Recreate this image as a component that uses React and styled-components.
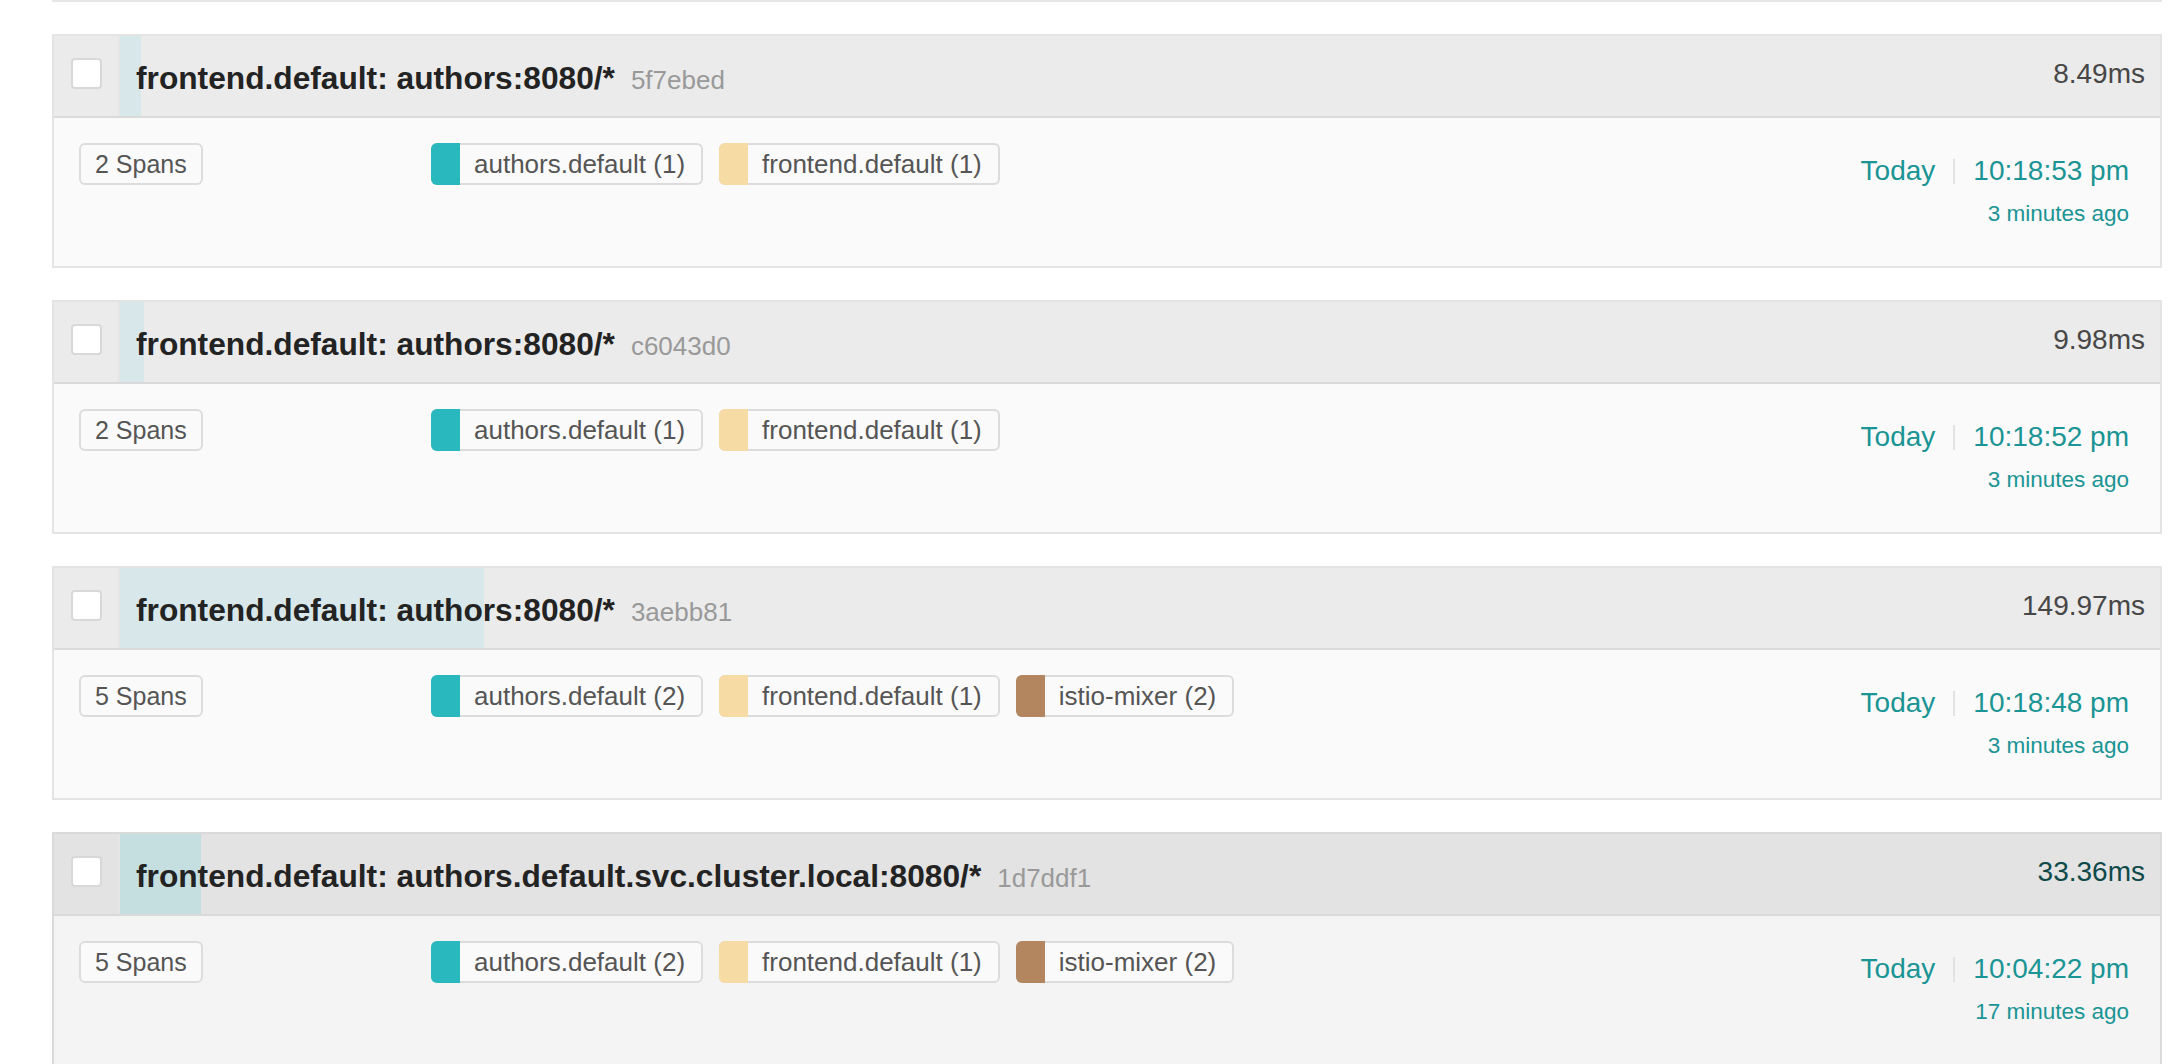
import React from 'react';
import styled, { createGlobalStyle } from 'styled-components';

const GlobalStyle = createGlobalStyle`
  html, body {
    margin: 0;
    padding: 0;
    background: #ffffff;
    overflow: hidden;
  }
  body {
    font-family: "Liberation Sans", Arial, Helvetica, sans-serif;
  }
`;

const Page = styled.div`
  padding: 0 14px 0 52px;
`;

const PrevEdge = styled.div`
  height: 2px;
  background: #e6e6e6;
  margin-bottom: 32px;
`;

const Card = styled.div`
  border: 2px solid ${(p) => (p.$active ? '#dadada' : '#e4e4e4')};
  margin-bottom: 32px;
`;

const Header = styled.div`
  display: flex;
  align-items: stretch;
  height: 80px;
  background: ${(p) => (p.$active ? '#e3e3e3' : '#ebebeb')};
  border-bottom: 2px solid #dadada;
`;

const CheckCell = styled.div`
  flex: none;
  width: 64px;
  box-sizing: border-box;
  padding: 22px 0 0 17px;
`;

const Checkbox = styled.span`
  display: block;
  width: 31px;
  height: 31px;
  box-sizing: border-box;
  background: #ffffff;
  border: 2px solid #d8d8d8;
  border-radius: 4px;
`;

const TitleCell = styled.div`
  position: relative;
  flex: 1;
  display: flex;
  align-items: flex-start;
  justify-content: space-between;
  border-left: 2px solid #e6e6e6;
  padding: 0 15px 0 16px;
`;

const DurationBar = styled.div`
  position: absolute;
  left: 0;
  top: 0;
  bottom: 0;
  background: ${(p) => (p.$active ? '#c5dfe1' : '#d8e7ea')};
`;

const TitleRow = styled.div`
  position: relative;
  display: flex;
  align-items: baseline;
  gap: 16px;
  padding-top: 24px;
`;

const TitleText = styled.span`
  font-size: 31.7px;
  line-height: 36px;
  font-weight: 700;
  color: #232323;
`;

const TraceId = styled.span`
  font-size: 26px;
  color: #999999;
`;

const Duration = styled.span`
  position: relative;
  padding-top: 22px;
  font-size: 28px;
  line-height: 32px;
  color: ${(p) => (p.$active ? '#0f4a4a' : '#474747')};
`;

const Body = styled.div`
  display: grid;
  grid-template-columns: 352px 1fr auto;
  align-items: start;
  height: 148px;
  box-sizing: border-box;
  padding: 25px 31px 0 25px;
  background: ${(p) => (p.$active ? '#f4f4f4' : '#fafafa')};
`;

const Pill = styled.span`
  display: inline-flex;
  align-items: center;
  height: 42px;
  box-sizing: border-box;
  border: 2px solid #dcdcdc;
  border-radius: 6px;
  background: #fafafa;
  color: #555555;
  white-space: nowrap;
`;

const SpanBadge = styled(Pill)`
  justify-self: start;
  padding: 0 14px;
  font-size: 25px;
`;

const Tags = styled.div`
  display: flex;
  gap: 16px;
`;

const Tag = styled(Pill)`
  padding-right: 16px;
  font-size: 26px;
`;

const Swatch = styled.span`
  align-self: stretch;
  width: 29px;
  margin: -2px 14px -2px -2px;
  border-radius: 6px 0 0 6px;
  background: ${(p) => p.$color};
`;

const TimeCol = styled.div`
  display: flex;
  flex-direction: column;
  align-items: flex-end;
  margin-top: 12px;
  color: #1a9494;
`;

const DateLine = styled.div`
  display: flex;
  align-items: center;
  gap: 18px;
  font-size: 28px;
  line-height: 32px;
`;

const Sep = styled.span`
  width: 2px;
  height: 25px;
  background: #e2e2e2;
`;

const Ago = styled.div`
  margin-top: 14px;
  font-size: 22.5px;
  line-height: 26px;
`;

const COLORS = {
  authors: '#29b8bd',
  frontend: '#f6dba5',
  mixer: '#b3865f',
};

const twoServices = (a, f) => [
  { name: 'authors.default', count: a, color: COLORS.authors },
  { name: 'frontend.default', count: f, color: COLORS.frontend },
];

const threeServices = [
  { name: 'authors.default', count: 2, color: COLORS.authors },
  { name: 'frontend.default', count: 1, color: COLORS.frontend },
  { name: 'istio-mixer', count: 2, color: COLORS.mixer },
];

const traces = [
  {
    title: 'frontend.default: authors:8080/*',
    id: '5f7ebed',
    ms: 8.49,
    spans: 2,
    services: twoServices(1, 1),
    time: '10:18:53 pm',
    ago: '3 minutes ago',
  },
  {
    title: 'frontend.default: authors:8080/*',
    id: 'c6043d0',
    ms: 9.98,
    spans: 2,
    services: twoServices(1, 1),
    time: '10:18:52 pm',
    ago: '3 minutes ago',
  },
  {
    title: 'frontend.default: authors:8080/*',
    id: '3aebb81',
    ms: 149.97,
    spans: 5,
    services: threeServices,
    time: '10:18:48 pm',
    ago: '3 minutes ago',
  },
  {
    title: 'frontend.default: authors.default.svc.cluster.local:8080/*',
    id: '1d7ddf1',
    ms: 33.36,
    spans: 5,
    services: threeServices,
    time: '10:04:22 pm',
    ago: '17 minutes ago',
    active: true,
  },
];

const MAX_MS = 149.97;
const MAX_BAR = 364;

function TraceCard({ t }) {
  const barWidth = (t.ms / MAX_MS) * MAX_BAR;
  return (
    <Card $active={t.active}>
      <Header $active={t.active}>
        <CheckCell>
          <Checkbox />
        </CheckCell>
        <TitleCell>
          <DurationBar $active={t.active} style={{ width: `${barWidth}px` }} />
          <TitleRow>
            <TitleText>{t.title}</TitleText>
            <TraceId>{t.id}</TraceId>
          </TitleRow>
          <Duration $active={t.active}>{t.ms.toFixed(2)}ms</Duration>
        </TitleCell>
      </Header>
      <Body $active={t.active}>
        <SpanBadge>{t.spans} Spans</SpanBadge>
        <Tags>
          {t.services.map((s) => (
            <Tag key={s.name}>
              <Swatch $color={s.color} />
              {s.name} ({s.count})
            </Tag>
          ))}
        </Tags>
        <TimeCol>
          <DateLine>
            <span>Today</span>
            <Sep />
            <span>{t.time}</span>
          </DateLine>
          <Ago>{t.ago}</Ago>
        </TimeCol>
      </Body>
    </Card>
  );
}

export default function App() {
  return (
    <>
      <GlobalStyle />
      <Page>
        <PrevEdge />
        {traces.map((t) => (
          <TraceCard key={t.id} t={t} />
        ))}
      </Page>
    </>
  );
}
